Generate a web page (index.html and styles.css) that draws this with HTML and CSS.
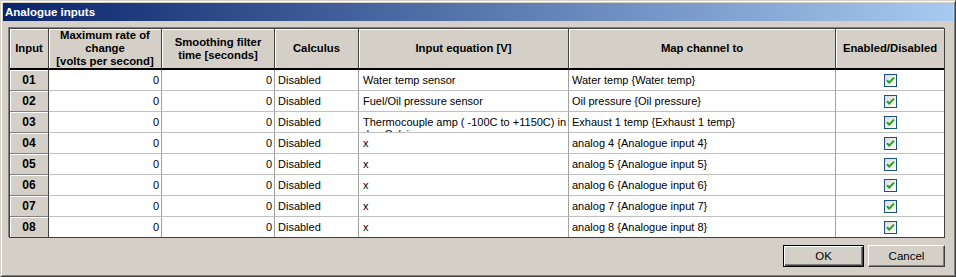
FILE: index.html
```html
<!DOCTYPE html>
<html lang="en">
<head>
  <meta charset="UTF-8" />
  <title>Analogue inputs</title>
  <link rel="stylesheet" href="styles.css">
</head>
<body>
  <div class="window">
    <div class="titlebar">Analogue inputs</div>
    <div class="content">
      <div class="grid" id="grid">
        <div class="hd">Input</div>
        <div class="hd">Maximum rate of<br />change<br />[volts per second]</div>
        <div class="hd">Smoothing filter<br />time [seconds]</div>
        <div class="hd">Calculus</div>
        <div class="hd">Input equation [V]</div>
        <div class="hd">Map channel to</div>
        <div class="hd last">Enabled/Disabled</div>
      </div>
      <div class="buttons">
        <button class="btn default">OK</button>
        <button class="btn">Cancel</button>
      </div>
    </div>
  </div>

  <script>
    const rows = [
      ["01", "Water temp sensor", "Water temp {Water temp}"],
      ["02", "Fuel/Oil pressure sensor", "Oil pressure {Oil pressure}"],
      ["03", "Thermocouple amp ( -100C to +1150C) in deg Celsius", "Exhaust 1 temp {Exhaust 1 temp}"],
      ["04", "x", "analog 4 {Analogue input 4}"],
      ["05", "x", "analog 5 {Analogue input 5}"],
      ["06", "x", "analog 6 {Analogue input 6}"],
      ["07", "x", "analog 7 {Analogue input 7}"],
      ["08", "x", "analog 8 {Analogue input 8}"],
    ];

    const check = `<svg class="check" width="13" height="13" viewBox="0 0 13 13">
      <defs><linearGradient id="cb" x1="0" y1="0" x2="1" y2="1">
        <stop offset="0" stop-color="#dcdcd6"/><stop offset="1" stop-color="#ffffff"/></linearGradient></defs>
      <rect x="0.5" y="0.5" width="12" height="12" fill="url(#cb)" stroke="#1c5180"/>
      <path d="M3 6.2 L5.2 8.6 L10 3.6" fill="none" stroke="#21a121" stroke-width="2"/>
    </svg>`;

    const grid = document.getElementById("grid");
    rows.forEach((r, i) => {
      const lastRow = i === rows.length - 1 ? " lastrow" : "";
      grid.insertAdjacentHTML("beforeend", `
        <div class="cell num${lastRow}">${r[0]}</div>
        <div class="cell right${lastRow}">0</div>
        <div class="cell right${lastRow}">0</div>
        <div class="cell${lastRow}">Disabled</div>
        <div class="cell eq${lastRow}"><span>${r[1]}</span></div>
        <div class="cell map${lastRow}">${r[2]}</div>
        <div class="cell center last${lastRow}">${check}</div>
      `);
    });
  </script>
</body>
</html>
```

FILE: styles.css
```css
body { margin: 0; background: #d4d0c8; font-family: "Liberation Sans", Arial, sans-serif; font-size: 11px; color: #000; }
.window { width: 956px; height: 277px; box-sizing: border-box; padding: 2px; background: #d4d0c8;
  border-top: 1px solid #d4d0c8; border-left: 1px solid #d4d0c8; border-right: 1px solid #404040; border-bottom: 1px solid #404040;
  box-shadow: inset 1px 1px #fff, inset -1px -1px #808080; }
.titlebar { height: 18px; line-height: 18px; padding-left: 2px; color: #fff; font-weight: bold; font-size: 11.5px;
  background: linear-gradient(to right, #0a246a, #a6caf0); }
.content { padding: 7px 0 0 6px; }
.grid { display: grid; grid-template-columns: 39px 113px 113px 84px 210px 267px 108px; width: 934px;
  border: 1px solid #404040; background: #fff; box-shadow: -1px -1px #808080; }
.hd { height: 41px; box-sizing: border-box; display: flex; align-items: center; justify-content: center; text-align: center;
  font-weight: bold; font-size: 11.3px; line-height: 13px; background: #d4d0c8; border-right: 1px solid #404040; border-bottom: 2px solid #000;
  box-shadow: inset 1px 1px #fff; }
.hd.last, .cell.last { border-right: none; }
.cell { height: 21px; box-sizing: border-box; display: flex; align-items: center; padding: 0 3px; white-space: nowrap; overflow: hidden;
  border-right: 1px solid #a0a0a0; border-bottom: 1px solid #c0c0c0; }
.cell.lastrow { border-bottom: none; height: 20px; }
.cell.num { justify-content: center; font-weight: bold; font-size: 12px; background: #d4d0c8; border-right: 1px solid #404040;
  border-bottom: 1px solid #808080; box-shadow: inset 1px 1px #fff; }
.cell.num.lastrow { border-bottom: none; }
.cell.right { justify-content: flex-end; padding-right: 2px; }
.cell.eq { padding: 0 0 0 4px; white-space: normal; align-items: flex-start; }
.cell.eq span { display: block; line-height: 12px; padding-top: 4px; }
.cell.map { padding-left: 3px; }
.cell.center { justify-content: center; }
.check { display: block; }
.buttons { display: flex; justify-content: flex-end; gap: 4px; width: 936px; margin-top: 7px; }
.btn { width: 77px; height: 22px; padding: 0; font-family: inherit; font-size: 11.5px; background: #d4d0c8; color: #000;
  border-top: 1px solid #fff; border-left: 1px solid #fff; border-right: 1px solid #404040; border-bottom: 1px solid #404040;
  box-shadow: inset -1px -1px #808080; }
.btn.default { width: 81px; border: 1px solid #000;
  box-shadow: inset 1px 1px #fff, inset -1px -1px #404040, inset -2px -2px #808080; }
```
